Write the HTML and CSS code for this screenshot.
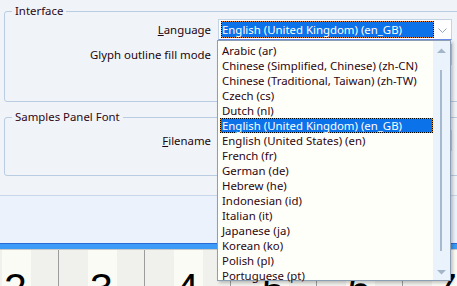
FILE: index.html
```html
<!doctype html>
<html>
<head>
    <meta charset="utf-8">
    <title>Preferences</title>
    <link rel="stylesheet" href="styles.css">
</head>
<body>
<div class="dialog">

    <fieldset class="group group-interface">
        <legend>Interface</legend>
        <div class="row">
            <label class="label"><u>L</u>anguage</label>
            <div class="combo combo-focus">
                <span class="combo-value">English (United Kingdom) (en_GB)</span>
                <span class="combo-arrow">
                    <svg width="9" height="5" viewBox="0 0 9 5"><path d="M0.5 0.5 L4.5 4.5 L8.5 0.5" fill="none" stroke="#8ea6c4" stroke-width="1"/></svg>
                </span>
            </div>
        </div>
        <div class="row">
            <label class="label">Glyph outline fill mode</label>
            <div class="combo"></div>
        </div>
    </fieldset>

    <fieldset class="group group-samples">
        <legend>Samples Panel Font</legend>
        <div class="row">
            <label class="label"><u>F</u>ilename</label>
            <div class="combo"></div>
        </div>
    </fieldset>

    <div class="toolbar"></div>

    <div class="glyphs">
        <div class="col-bar">
            <span class="col-name">two</span>
            <span class="col-name">three</span>
            <span class="col-name">four</span>
        </div>
        <div class="cells">
            <div class="cell">2</div>
            <div class="cell">3</div>
            <div class="cell">4</div>
            <div class="cell">5</div>
            <div class="cell">6</div>
            <div class="cell">7</div>
        </div>
    </div>

    <!-- open language list -->
    <div class="dropdown">
        <ul class="items">
            <li>Arabic (ar)</li>
            <li>Chinese (Simplified, Chinese) (zh-CN)</li>
            <li>Chinese (Traditional, Taiwan) (zh-TW)</li>
            <li>Czech (cs)</li>
            <li>Dutch (nl)</li>
            <li class="selected">English (United Kingdom) (en_GB)</li>
            <li>English (United States) (en)</li>
            <li>French (fr)</li>
            <li>German (de)</li>
            <li>Hebrew (he)</li>
            <li>Indonesian (id)</li>
            <li>Italian (it)</li>
            <li>Japanese (ja)</li>
            <li>Korean (ko)</li>
            <li>Polish (pl)</li>
            <li>Portuguese (pt)</li>
        </ul>
        <div class="scrollbar">
            <svg width="17" height="239" viewBox="0 0 17 239">
                <path d="M4 12 L8.5 7.5 L13 12 Z" fill="#a3b5c9"/>
                <rect x="7" y="29" width="2" height="181" fill="#a7b9cf"/>
                <path d="M4 229 L8.5 233.5 L13 229 Z" fill="#a3b5c9"/>
            </svg>
        </div>
    </div>

</div>
</body>
</html>
```

FILE: styles.css
```css
body { margin:0; background:#f0f4f9; font-family:"Noto Sans", "Liberation Sans", sans-serif; font-size:11.4px; color:#22050d; }
.dialog { position:relative; width:457px; height:286px; overflow:hidden; display:flex; flex-direction:column; }
.dialog > * { flex:none; }

/* group boxes */
.group { margin:3px -20px 0 4px; padding:0; border:1px solid #b9cce1; border-radius:3px; min-width:0; }
.group legend { margin-left:7px; padding:0 3px; line-height:16px; color:#2e0614; }
.group-interface { padding-bottom:36px; }
.group-samples { margin-top:7px; padding-top:5px; padding-bottom:24px; }

.row { display:grid; grid-template-columns:206px 234px; column-gap:7px; align-items:center; height:21px; }
.row + .row { margin-top:4px; }
.label { text-align:right; line-height:16px; }

.combo { box-sizing:border-box; height:21px; border:1px solid #c4d3e4; background:#fff; display:flex; align-items:center; }
.combo-focus { border-bottom-color:#6d8ee9; }
.combo-value { box-sizing:border-box; width:213px; height:17px; margin-left:2px; line-height:15px; color:#fff;
    border:1px dotted #000; background:#f08a1c; box-shadow:inset 0 0 0 20px #0c72ea; white-space:nowrap; overflow:hidden; }
.combo-arrow { flex:1; display:flex; justify-content:center; padding-top:2px; }

/* lower area */
.toolbar { margin-top:19px; height:47px; border-top:1px solid #c7d7e9; background:#ebf2fb; }

.dialog > .glyphs { flex:1; min-height:0; overflow:hidden; display:flex; flex-direction:column; }
.col-bar { flex:none; height:5px; border-top:1px solid #2869d6; background:#3b9bf6; display:flex; overflow:hidden; }
.col-name { display:block; flex:none; width:86px; text-align:center; line-height:12px; margin-top:-10px; font-size:9px; color:#202040; }
.col-name:first-child { margin-left:-27px; }
.cells { flex:none; display:flex; margin-left:-27px; border-top:1px solid #c9c9c9; }
.cell { flex:none; width:85px; height:60px; border-right:1px solid #9c9c9c; text-align:center;
    background:linear-gradient(to right, #f0f0ec 29px, #fbfbf6 29px, #fbfbf6 58px, #f0f0ec 58px);
    font-family:"Liberation Sans", sans-serif; font-size:41px; line-height:41px; padding-top:18px; color:#000; }

/* dropdown list */
.dropdown { position:absolute; left:217px; top:40px; width:234px; height:241px; box-sizing:border-box;
    border:1px solid #8d9fb4; background:#fffffa; display:flex; box-shadow:2px 2px 3px rgba(0,0,0,0.22); }
.items { flex:1; margin:0; padding:2px 0 0 2px; list-style:none; }
.items li { height:15px; line-height:15px; padding-left:2px; white-space:nowrap; color:#2c0611; }
.items li.selected { box-sizing:border-box; padding-left:1px; line-height:13px; color:#fff;
    border:1px dotted #000; background:#f08a1c; box-shadow:inset 0 0 0 20px #0c72ea; }
.scrollbar { width:17px; background:#eaf2fb; }
.scrollbar svg { display:block; }
```
